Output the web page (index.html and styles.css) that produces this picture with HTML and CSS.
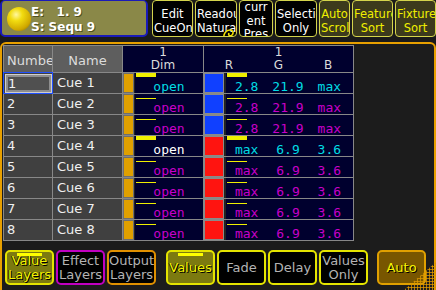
FILE: index.html
```html
<!DOCTYPE html>
<html lang="en">
<head>
  <meta charset="UTF-8" />
  <title>Sequence Sheet</title>
  <link rel="stylesheet" href="styles.css">
</head>
<body>
  <div class="topbar">
    <div class="status">
      <div class="ball"></div>
      <div class="status-text">
        <div class="line">E:   1. 9</div>
        <div class="line">S: Sequ 9</div>
      </div>
    </div>
    <div class="tbtn w41">Edit CueOn</div>
    <div class="tbtn w42 readout">Readout Natural
      <svg class="curl" width="14" height="13" viewBox="0 0 14 13"><path d="M2 12 C1 7 4 3 8 3 C11 3 12 6 10 8 C8 10 6 8 7 6" fill="none" stroke="#f0e000" stroke-width="1.6"/></svg>
    </div>
    <div class="tbtn w34 current">current Preset</div>
    <div class="tbtn w42">Selection Only</div>
    <div class="tbtn w31 olive">Auto Scroll</div>
    <div class="tbtn w41 olive">Feature Sort</div>
    <div class="tbtn w41 olive">Fixture Sort</div>
  </div>

  <div class="frame">
    <div class="sheet">
      <div class="hd grey num">Number</div>
      <div class="hd grey">Name</div>
      <div class="hd navy"><div>1</div><div>Dim</div></div>
      <div class="hd navy"><div>1</div><div class="rgb-head"><span>R</span><span>G</span><span>B</span></div></div>

      <div class="cell num selected"><div class="edit">1</div></div>
      <div class="cell name">Cue 1</div>
      <div class="cell dim"><div class="fader"></div><div class="val cyan"><i class="bar thick"></i>open</div></div>
      <div class="cell dim"><div class="swatch blue"></div><div class="val vals cyan"><i class="bar thick"></i><span>2.8</span><span>21.9</span><span>max</span></div></div>

      <div class="cell num">2</div>
      <div class="cell name">Cue 2</div>
      <div class="cell dim"><div class="fader"></div><div class="val magenta"><i class="bar"></i>open</div></div>
      <div class="cell dim"><div class="swatch blue"></div><div class="val vals magenta"><i class="bar"></i><span>2.8</span><span>21.9</span><span>max</span></div></div>

      <div class="cell num">3</div>
      <div class="cell name">Cue 3</div>
      <div class="cell dim"><div class="fader"></div><div class="val magenta"><i class="bar"></i>open</div></div>
      <div class="cell dim"><div class="swatch blue"></div><div class="val vals magenta"><i class="bar"></i><span>2.8</span><span>21.9</span><span>max</span></div></div>

      <div class="cell num">4</div>
      <div class="cell name">Cue 4</div>
      <div class="cell dim"><div class="fader"></div><div class="val white"><i class="bar thick"></i>open</div></div>
      <div class="cell dim"><div class="swatch red"></div><div class="val vals cyan"><i class="bar thick"></i><span>max</span><span>6.9</span><span>3.6</span></div></div>

      <div class="cell num">5</div>
      <div class="cell name">Cue 5</div>
      <div class="cell dim"><div class="fader"></div><div class="val magenta"><i class="bar"></i>open</div></div>
      <div class="cell dim"><div class="swatch red"></div><div class="val vals magenta"><i class="bar"></i><span>max</span><span>6.9</span><span>3.6</span></div></div>

      <div class="cell num">6</div>
      <div class="cell name">Cue 6</div>
      <div class="cell dim"><div class="fader"></div><div class="val magenta"><i class="bar"></i>open</div></div>
      <div class="cell dim"><div class="swatch red"></div><div class="val vals magenta"><i class="bar"></i><span>max</span><span>6.9</span><span>3.6</span></div></div>

      <div class="cell num">7</div>
      <div class="cell name">Cue 7</div>
      <div class="cell dim"><div class="fader"></div><div class="val magenta"><i class="bar"></i>open</div></div>
      <div class="cell dim"><div class="swatch red"></div><div class="val vals magenta"><i class="bar"></i><span>max</span><span>6.9</span><span>3.6</span></div></div>

      <div class="cell num">8</div>
      <div class="cell name">Cue 8</div>
      <div class="cell dim"><div class="fader"></div><div class="val magenta"><i class="bar"></i>open</div></div>
      <div class="cell dim"><div class="swatch red"></div><div class="val vals magenta"><i class="bar"></i><span>max</span><span>6.9</span><span>3.6</span></div></div>
    </div>

    <div class="bottombar">
      <div class="bbtn on"><i class="flag"></i>Value Layers</div>
      <div class="bbtn effect">Effect Layers</div>
      <div class="bbtn output">Output Layers</div>
      <div class="bbtn on gapl"><i class="flag"></i>Values</div>
      <div class="bbtn">Fade</div>
      <div class="bbtn">Delay</div>
      <div class="bbtn">Values Only</div>
      <div class="bbtn auto">Auto</div>
    </div>
  </div>

  <div class="grip"></div>
</body>
</html>
```

FILE: styles.css
```css
* {
  box-sizing: border-box;
}

body {
  margin: 0;
  width: 436px;
  height: 290px;
  overflow: hidden;
  position: relative;
  background-color: #1a1a1a;
  font-family: "DejaVu Sans", sans-serif;
}

/* top bar */
.topbar {
  display: flex;
  gap: 2px;
  height: 37px;
}

.status {
  width: 148px;
  margin-right: 2px;
  display: flex;
  align-items: flex-start;
  padding: 5px 0 0 5px;
  background-color: #8a8848;
  border: 2px solid #1a1ab8;
  border-top-width: 1px;
  border-radius: 5px;
}

.ball {
  width: 24px;
  height: 24px;
  margin-top: 1px;
  border-radius: 50%;
  background: radial-gradient(circle at 38% 32%, #fff7a0 0%, #f2dc10 28%, #d0a800 68%, #7a5e00 100%);
}

.status-text {
  margin-top: -1px;
  color: #fff;
  font-weight: bold;
  font-size: 12px;
  line-height: 15px;
  text-shadow: 1px 1px 0 #50501e;
}

.status-text .line {
  white-space: pre;
}

.tbtn {
  position: relative;
  height: 37px;
  padding: 7px 1px 0;
  background-color: #000;
  color: #fff;
  border: 1px solid #d4d44c;
  border-radius: 4px;
  font-size: 11.5px;
  line-height: 13.5px;
  text-align: center;
  overflow: hidden;
}

.tbtn.olive {
  background-color: #3c3a1c;
  color: #f0f000;
}

.tbtn.current {
  padding: 0 3px;
  overflow-wrap: anywhere;
}

.w31 { width: 31px; }
.w34 { width: 34px; }
.w41 { width: 41px; }
.w42 { width: 42px; }

.curl {
  position: absolute;
  left: 26px;
  top: 26px;
}

/* window frame */
.frame {
  height: 260px;
  margin-top: 5px;
  padding: 1px 0 0 1px;
  background-color: #1c1c1c;
  border: 2px solid #e8a000;
  border-radius: 6px 6px 0 0;
}

.sheet {
  width: 351px;
  display: grid;
  grid-template-columns: 48px 69px 80px 149px;
  grid-template-rows: 26px repeat(8, 20px);
  gap: 1px;
  padding: 1px;
  background-color: #888;
}

.hd {
  color: #dcdcdc;
  font-size: 12px;
  text-align: center;
  overflow: hidden;
}

.hd.grey {
  background-color: #5e5e5e;
  font-size: 13px;
  line-height: 26px;
  padding-top: 2px;
}

.hd.grey.num {
  text-align: left;
  padding-left: 3px;
  white-space: nowrap;
}

.hd.navy {
  background-color: #00002e;
  line-height: 13px;
}

.rgb-head {
  display: grid;
  grid-template-columns: repeat(3, 1fr);
}

.cell {
  background-color: #404040;
  color: #f0f0f0;
  font-size: 13px;
  line-height: 20px;
  overflow: hidden;
  white-space: nowrap;
}

.cell.num {
  padding-left: 3px;
}

.cell.name {
  padding-left: 4px;
}

.cell.selected {
  padding: 1px 0 0 1px;
  outline: 1px solid #2050ff;
}

.edit {
  height: 19px;
  padding-left: 2px;
  background-color: #505050;
  border: 1px solid #cfcfcf;
  box-shadow: inset 0 0 0 2px #8e8e8e;
  line-height: 17px;
}

.cell.dim {
  display: flex;
  gap: 1px;
  background-color: #222;
}

.fader {
  width: 11px;
  background-color: #e0a000;
  border: 1px solid #6e6e6e;
}

.swatch {
  width: 20px;
  margin-right: 1px;
  border: 1px solid #8a8a8a;
}

.swatch.blue { background-color: #1040ff; }
.swatch.red { background-color: #ff1410; }

.val {
  position: relative;
  flex: 1;
  padding-top: 7px;
  background-color: #00002e;
  font-family: "DejaVu Sans Mono", monospace;
  font-size: 13px;
  line-height: 14px;
  text-align: center;
}

.vals {
  display: grid;
  grid-template-columns: repeat(3, 1fr);
  padding-right: 3px;
}

.cyan { color: #00dce4; }
.magenta { color: #c800c8; }
.white { color: #fff; }

.bar {
  position: absolute;
  left: 1px;
  top: 4px;
  width: 20px;
  height: 1px;
  background-color: #f0f000;
}

.bar.thick {
  top: 0;
  height: 4px;
}

/* bottom buttons */
.bottombar {
  display: flex;
  gap: 2px;
  padding: 9px 0 0 2px;
}

.bbtn {
  position: relative;
  width: 49px;
  height: 35px;
  display: flex;
  align-items: center;
  justify-content: center;
  background-color: #000;
  color: #b4b4b4;
  border: 2px solid #e4e400;
  border-radius: 5px;
  font-size: 13px;
  line-height: 13.5px;
  text-align: center;
}

.bbtn.on {
  background-color: #7c7a10;
  color: #f4f400;
  text-shadow: 1px 1px 0 #000, -1px 0 0 #2a2a00;
}

.bbtn.effect {
  border-color: #c000c0;
}

.bbtn.output {
  border-color: #e09000;
}

.bbtn.gapl {
  margin-left: 8px;
}

.bbtn.auto {
  margin-left: 7px;
  background-color: #785600;
  border-color: #e0a000;
  color: #f4f400;
  text-shadow: 1px 1px 0 #000;
}

.flag {
  position: absolute;
  left: 10px;
  top: 1px;
  width: 25px;
  height: 3px;
  background-color: #ffff00;
}

.grip {
  position: absolute;
  right: 0;
  bottom: 0;
  width: 32px;
  height: 28px;
  background-image: radial-gradient(circle, #d89400 45%, transparent 55%);
  background-size: 3px 3px;
  clip-path: polygon(100% 0, 100% 100%, 0 100%);
}
```
